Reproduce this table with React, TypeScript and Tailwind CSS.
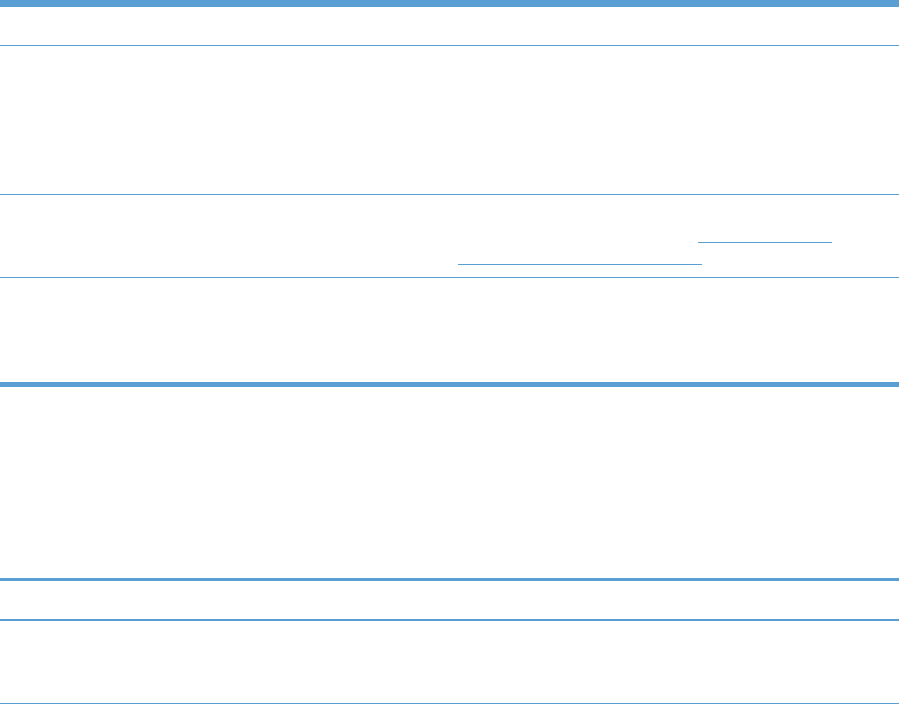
export default function App() {
  return (
    <div className="h-[704px] w-[900px] bg-white font-['Liberation_Sans',sans-serif]">
      <div className="w-[899px]">
        <div className="h-[7px] bg-[#5a9fd4]" />
        <div className="h-[39px] border-b border-[#5a9fd4]" />
        <div className="h-[149px] border-b border-[#5a9fd4]" />
        <div className="grid h-[83px] grid-cols-[458px_1fr] border-b border-[#5a9fd4]">
          <div />
          <div className="flex flex-col">
            <span className="ml-[240px] mt-[47px] h-px w-[134px] bg-[#5a9fd4]" />
            <span className="mt-[21px] h-px w-[244px] bg-[#5a9fd4]" />
          </div>
        </div>
        <div className="h-[109px] border-b-[5px] border-[#5a9fd4]" />
        <div className="h-[194px] border-b-[3px] border-[#5a9fd4]" />
        <div className="h-[40px] border-b-2 border-[#5a9fd4]" />
        <div className="h-[83px] border-b border-[#5a9fd4]" />
      </div>
    </div>
  );
}
